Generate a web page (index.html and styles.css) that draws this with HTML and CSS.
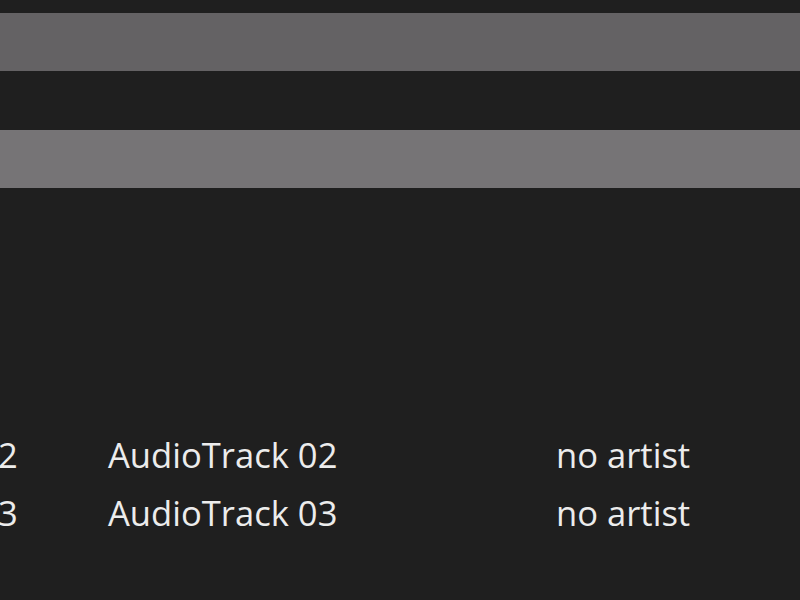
FILE: index.html
```html
<!DOCTYPE html>
<html>
<head>
<meta charset="utf-8">
<link rel="stylesheet" href="styles.css">
</head>
<body>
<div class="screen">
  <div class="bar bar-a"></div>
  <div class="bar bar-b"></div>
  <div class="list">
    <div class="row"><span class="num">2</span><span class="title">AudioTrack 02</span><span class="artist">no artist</span></div>
    <div class="row"><span class="num">3</span><span class="title">AudioTrack 03</span><span class="artist">no artist</span></div>
  </div>
</div>
</body>
</html>
```
FILE: styles.css
```css
html, body {
  margin: 0;
  padding: 0;
  background: #1f1f1f;
}
.screen {
  width: 800px;
  height: 600px;
  overflow: hidden;
  background: #1f1f1f;
  padding-top: 13px;
  box-sizing: border-box;
}
.bar {
  height: 58px;
}
.bar-a {
  background: #646264;
}
.bar-b {
  background: #767476;
  margin-top: 59px;
}
.list {
  margin-top: 238px;
  font-family: "Open Sans", "Noto Sans", sans-serif;
  font-size: 34.6px;
  color: #ececec;
}
.row {
  display: flex;
  height: 58px;
  line-height: 58px;
  white-space: nowrap;
}
.num {
  width: 16px;
  text-align: right;
  flex: none;
  margin-left: -2px;
}
.title {
  margin-left: 94px;
  width: 448px;
  flex: none;
}
.artist {
  flex: none;
}
```
